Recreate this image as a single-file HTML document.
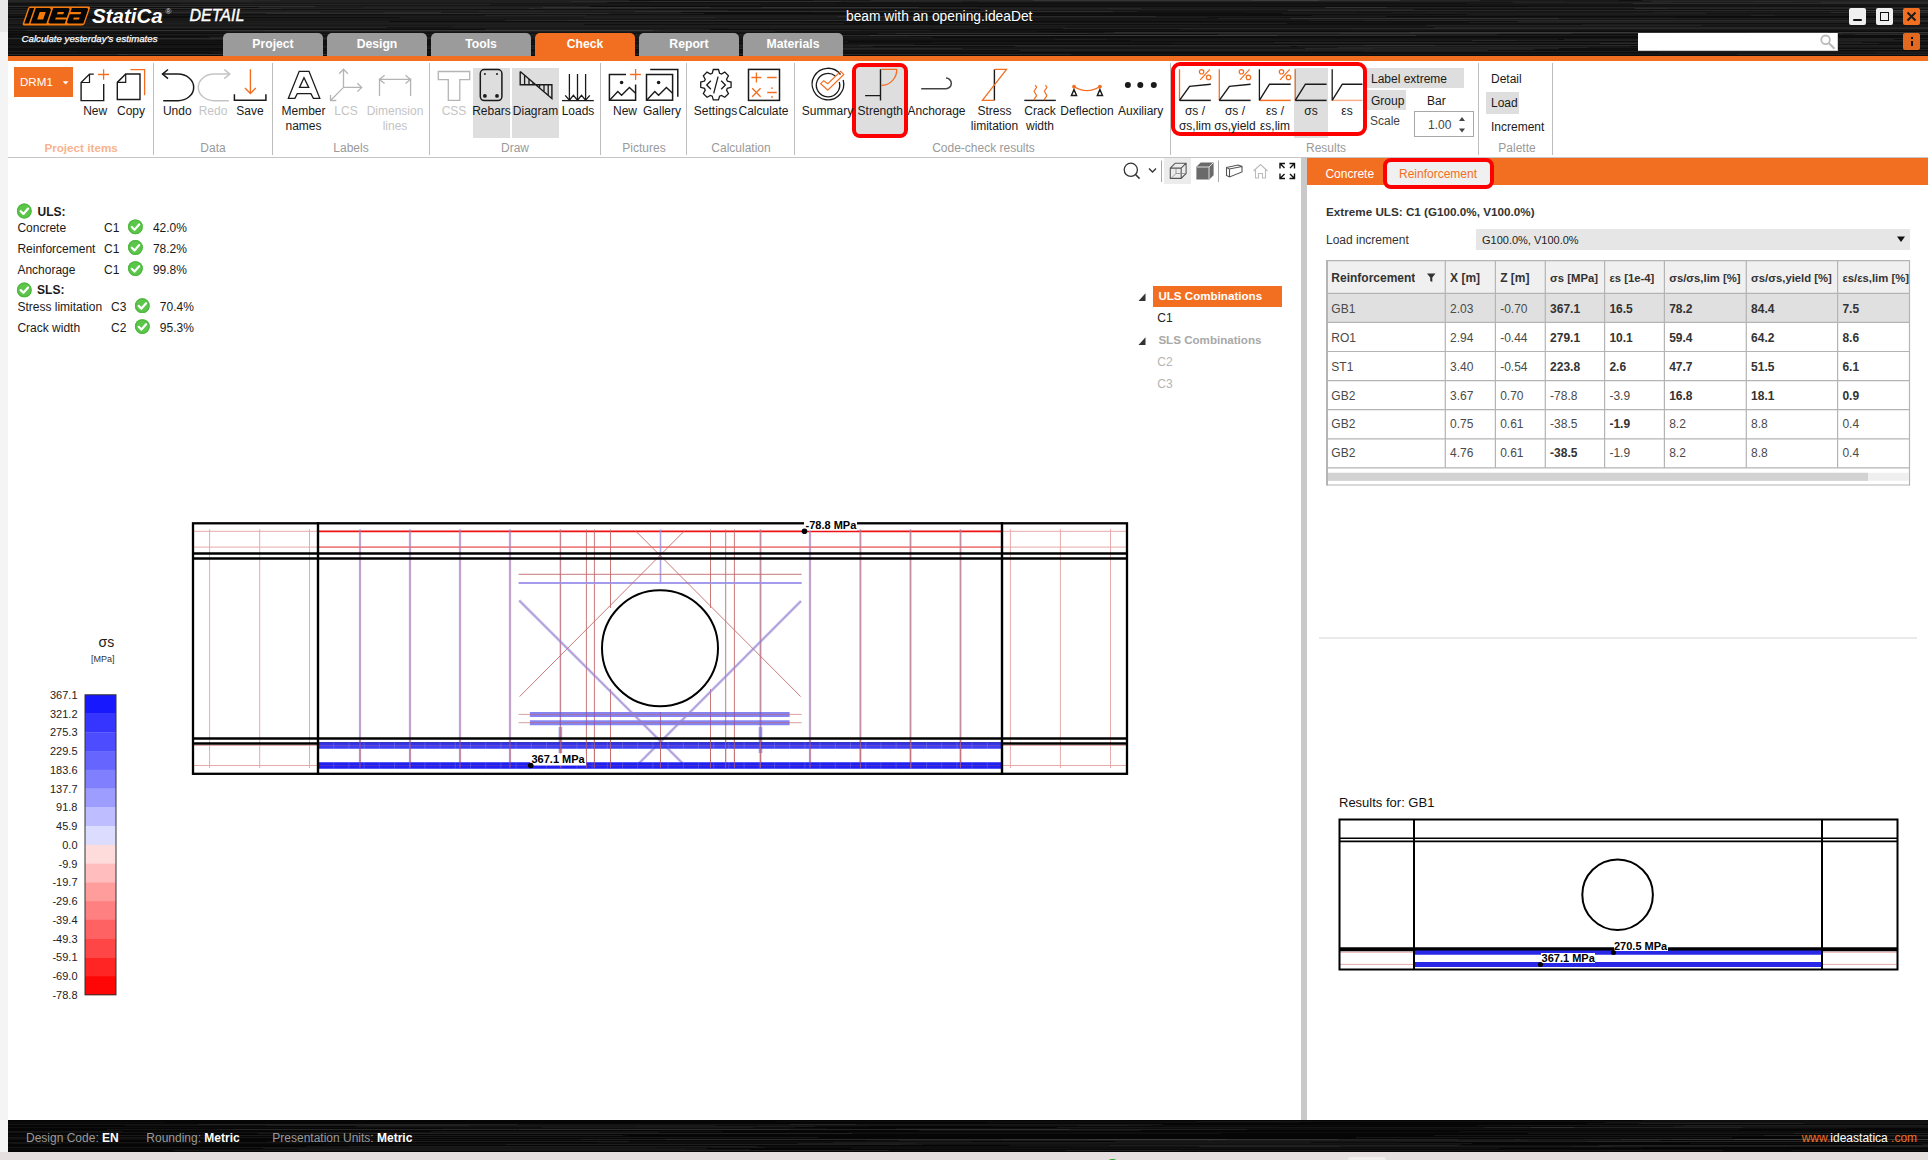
<!DOCTYPE html>
<html><head><meta charset="utf-8">
<style>
*{box-sizing:border-box;margin:0;padding:0}
html,body{width:1928px;height:1160px;overflow:hidden;background:#f4f4f4;font-family:"Liberation Sans",sans-serif;font-size:12px;color:#1a1a1a}
.a{position:absolute}
.brush{background-color:#080808;background-image:repeating-linear-gradient(180deg,rgba(255,255,255,0.00) 0px,rgba(255,255,255,0.05) 1px,rgba(0,0,0,0.0) 2px,rgba(255,255,255,0.09) 3px,rgba(0,0,0,0.1) 5px,rgba(255,255,255,0.03) 7px)}
.t{position:absolute;white-space:nowrap;line-height:14px}
.grp{position:absolute;top:141px;color:#9a9a9a;font-size:12px;line-height:14px;text-align:center}
.sep{position:absolute;top:63px;width:1px;height:92px;background:#bdbdbd}
.lbl{position:absolute;white-space:nowrap;text-align:center;line-height:14px;font-size:12px;color:#1a1a1a}
.dis{color:#c4c4c4}
svg{position:absolute;overflow:visible}
</style></head><body>
<!-- left strip -->
<div class="a" style="left:0;top:0;width:8px;height:32px;background:#e8e8e8"></div>
<!-- header -->
<div class="a" id="hdrbrush" style="left:8px;top:0;width:1920px;height:56px;overflow:hidden"><svg style="left:0;top:0" width="1920" height="56" viewBox="0 0 1920 56"><rect width="1920" height="56" fill="#0d0d0d"/><rect y="0" width="1920" height="1" fill="#fff" fill-opacity="0.015"/><rect y="1" width="1920" height="1" fill="#fff" fill-opacity="0.03"/><rect y="2" width="1920" height="1" fill="#fff" fill-opacity="0.015"/><rect y="3" width="1920" height="1" fill="#fff" fill-opacity="0.015"/><rect y="4" width="1920" height="1" fill="#fff" fill-opacity="0.03"/><rect y="5" width="1920" height="1" fill="#fff" fill-opacity="0.03"/><rect y="8" width="1920" height="1" fill="#fff" fill-opacity="0.03"/><rect y="9" width="1920" height="1" fill="#fff" fill-opacity="0.015"/><rect y="10" width="1920" height="1" fill="#fff" fill-opacity="0.045"/><rect y="11" width="1920" height="1" fill="#fff" fill-opacity="0.03"/><rect y="14" width="1920" height="1" fill="#fff" fill-opacity="0.015"/><rect y="18" width="1920" height="1" fill="#fff" fill-opacity="0.03"/><rect y="19" width="1920" height="1" fill="#fff" fill-opacity="0.045"/><rect y="20" width="1920" height="1" fill="#fff" fill-opacity="0.045"/><rect y="22" width="1920" height="1" fill="#fff" fill-opacity="0.03"/><rect y="23" width="1920" height="1" fill="#fff" fill-opacity="0.015"/><rect y="24" width="1920" height="1" fill="#fff" fill-opacity="0.015"/><rect y="25" width="1920" height="1" fill="#fff" fill-opacity="0.045"/><rect y="26" width="1920" height="1" fill="#fff" fill-opacity="0.045"/><rect y="27" width="1920" height="1" fill="#fff" fill-opacity="0.03"/><rect y="28" width="1920" height="1" fill="#fff" fill-opacity="0.045"/><rect y="30" width="1920" height="1" fill="#fff" fill-opacity="0.03"/><rect y="32" width="1920" height="1" fill="#fff" fill-opacity="0.03"/><rect y="38" width="1920" height="1" fill="#fff" fill-opacity="0.03"/><rect y="40" width="1920" height="1" fill="#fff" fill-opacity="0.015"/><rect y="42" width="1920" height="1" fill="#fff" fill-opacity="0.015"/><rect y="43" width="1920" height="1" fill="#fff" fill-opacity="0.03"/><rect y="45" width="1920" height="1" fill="#fff" fill-opacity="0.03"/><rect y="47" width="1920" height="1" fill="#fff" fill-opacity="0.045"/><rect y="49" width="1920" height="1" fill="#fff" fill-opacity="0.015"/><rect y="51" width="1920" height="1" fill="#fff" fill-opacity="0.045"/><rect y="53" width="1920" height="1" fill="#fff" fill-opacity="0.015"/><rect y="54" width="1920" height="1" fill="#fff" fill-opacity="0.045"/><rect x="40" y="26" width="924" height="1" fill="#fff" fill-opacity="0.035"/><rect x="640" y="48" width="725" height="1" fill="#fff" fill-opacity="0.037"/><rect x="142" y="4" width="610" height="1" fill="#fff" fill-opacity="0.026"/><rect x="1283" y="18" width="268" height="1" fill="#fff" fill-opacity="0.077"/><rect x="-298" y="54" width="418" height="1" fill="#fff" fill-opacity="0.033"/><rect x="1625" y="3" width="584" height="1" fill="#fff" fill-opacity="0.079"/><rect x="1419" y="25" width="274" height="1" fill="#fff" fill-opacity="0.054"/><rect x="805" y="12" width="544" height="1" fill="#fff" fill-opacity="0.025"/><rect x="-238" y="21" width="619" height="1" fill="#fff" fill-opacity="0.065"/><rect x="251" y="7" width="452" height="1" fill="#fff" fill-opacity="0.062"/><rect x="-55" y="0" width="676" height="1" fill="#fff" fill-opacity="0.068"/><rect x="471" y="11" width="658" height="1" fill="#fff" fill-opacity="0.051"/><rect x="236" y="46" width="629" height="1" fill="#fff" fill-opacity="0.059"/><rect x="1317" y="7" width="630" height="1" fill="#fff" fill-opacity="0.079"/><rect x="805" y="0" width="806" height="1" fill="#fff" fill-opacity="0.038"/><rect x="563" y="1" width="391" height="1" fill="#fff" fill-opacity="0.044"/><rect x="110" y="54" width="243" height="1" fill="#fff" fill-opacity="0.079"/><rect x="1508" y="13" width="464" height="1" fill="#fff" fill-opacity="0.021"/><rect x="1047" y="39" width="503" height="1" fill="#fff" fill-opacity="0.043"/><rect x="69" y="4" width="413" height="1" fill="#fff" fill-opacity="0.055"/><rect x="-237" y="15" width="815" height="1" fill="#fff" fill-opacity="0.042"/><rect x="1556" y="39" width="330" height="1" fill="#fff" fill-opacity="0.078"/><rect x="255" y="30" width="595" height="1" fill="#fff" fill-opacity="0.031"/><rect x="973" y="9" width="433" height="1" fill="#fff" fill-opacity="0.069"/><rect x="477" y="15" width="362" height="1" fill="#fff" fill-opacity="0.064"/><rect x="505" y="35" width="903" height="1" fill="#fff" fill-opacity="0.077"/><rect x="21" y="30" width="631" height="1" fill="#fff" fill-opacity="0.023"/><rect x="-142" y="6" width="724" height="1" fill="#fff" fill-opacity="0.078"/><rect x="1304" y="15" width="463" height="1" fill="#fff" fill-opacity="0.045"/><rect x="1711" y="38" width="500" height="1" fill="#fff" fill-opacity="0.051"/><rect x="-19" y="46" width="329" height="1" fill="#fff" fill-opacity="0.034"/><rect x="3" y="35" width="486" height="1" fill="#fff" fill-opacity="0.033"/><rect x="-233" y="13" width="270" height="1" fill="#fff" fill-opacity="0.036"/><rect x="720" y="28" width="261" height="1" fill="#fff" fill-opacity="0.023"/><rect x="1210" y="18" width="743" height="1" fill="#fff" fill-opacity="0.054"/><rect x="77" y="8" width="570" height="1" fill="#fff" fill-opacity="0.028"/><rect x="1055" y="28" width="872" height="1" fill="#fff" fill-opacity="0.064"/><rect x="274" y="33" width="804" height="1" fill="#fff" fill-opacity="0.022"/><rect x="1644" y="1" width="566" height="1" fill="#fff" fill-opacity="0.062"/><rect x="-213" y="2" width="812" height="1" fill="#fff" fill-opacity="0.058"/><rect x="-25" y="30" width="948" height="1" fill="#fff" fill-opacity="0.039"/><rect x="-4" y="8" width="277" height="1" fill="#fff" fill-opacity="0.047"/><rect x="-118" y="23" width="954" height="1" fill="#fff" fill-opacity="0.064"/><rect x="1099" y="8" width="560" height="1" fill="#fff" fill-opacity="0.025"/><rect x="18" y="30" width="627" height="1" fill="#fff" fill-opacity="0.077"/><rect x="1747" y="1" width="786" height="1" fill="#fff" fill-opacity="0.021"/><rect x="1266" y="42" width="588" height="1" fill="#fff" fill-opacity="0.055"/><rect x="-5" y="38" width="282" height="1" fill="#fff" fill-opacity="0.025"/><rect x="753" y="7" width="626" height="1" fill="#fff" fill-opacity="0.064"/><rect x="1574" y="24" width="651" height="1" fill="#fff" fill-opacity="0.048"/><rect x="43" y="34" width="731" height="1" fill="#fff" fill-opacity="0.065"/><rect x="970" y="1" width="815" height="1" fill="#fff" fill-opacity="0.025"/><rect x="642" y="1" width="915" height="1" fill="#fff" fill-opacity="0.027"/><rect x="1691" y="49" width="461" height="1" fill="#fff" fill-opacity="0.074"/><rect x="933" y="23" width="346" height="1" fill="#fff" fill-opacity="0.061"/><rect x="1823" y="12" width="373" height="1" fill="#fff" fill-opacity="0.065"/><rect x="1510" y="21" width="710" height="1" fill="#fff" fill-opacity="0.074"/><rect x="1357" y="20" width="881" height="1" fill="#fff" fill-opacity="0.035"/><rect x="1464" y="40" width="972" height="1" fill="#fff" fill-opacity="0.075"/><rect x="1274" y="13" width="424" height="1" fill="#fff" fill-opacity="0.055"/><rect x="559" y="20" width="339" height="1" fill="#fff" fill-opacity="0.028"/><rect x="-134" y="22" width="928" height="1" fill="#fff" fill-opacity="0.024"/><rect x="392" y="17" width="315" height="1" fill="#fff" fill-opacity="0.047"/><rect x="576" y="17" width="623" height="1" fill="#fff" fill-opacity="0.043"/><rect x="1722" y="33" width="888" height="1" fill="#fff" fill-opacity="0.039"/><rect x="1553" y="53" width="528" height="1" fill="#fff" fill-opacity="0.024"/><rect x="839" y="2" width="822" height="1" fill="#fff" fill-opacity="0.022"/><rect x="851" y="45" width="784" height="1" fill="#fff" fill-opacity="0.041"/><rect x="-222" y="41" width="856" height="1" fill="#fff" fill-opacity="0.028"/><rect x="477" y="29" width="225" height="1" fill="#fff" fill-opacity="0.066"/><rect x="672" y="17" width="997" height="1" fill="#fff" fill-opacity="0.028"/><rect x="172" y="3" width="657" height="1" fill="#fff" fill-opacity="0.027"/><rect x="1210" y="34" width="279" height="1" fill="#fff" fill-opacity="0.061"/><rect x="1646" y="12" width="462" height="1" fill="#fff" fill-opacity="0.031"/><rect x="1634" y="0" width="747" height="1" fill="#fff" fill-opacity="0.063"/><rect x="627" y="11" width="478" height="1" fill="#fff" fill-opacity="0.067"/><rect x="1831" y="34" width="712" height="1" fill="#fff" fill-opacity="0.057"/><rect x="352" y="48" width="602" height="1" fill="#fff" fill-opacity="0.071"/><rect x="617" y="44" width="289" height="1" fill="#fff" fill-opacity="0.045"/><rect x="1289" y="46" width="333" height="1" fill="#fff" fill-opacity="0.047"/><rect x="-273" y="12" width="585" height="1" fill="#fff" fill-opacity="0.053"/><rect x="1758" y="41" width="551" height="1" fill="#fff" fill-opacity="0.048"/><rect x="539" y="41" width="301" height="1" fill="#fff" fill-opacity="0.063"/><rect x="205" y="52" width="418" height="1" fill="#fff" fill-opacity="0.035"/><rect x="59" y="24" width="517" height="1" fill="#fff" fill-opacity="0.052"/><rect x="1012" y="50" width="468" height="1" fill="#fff" fill-opacity="0.075"/><rect x="-236" y="54" width="556" height="1" fill="#fff" fill-opacity="0.05"/><rect x="1505" y="2" width="550" height="1" fill="#fff" fill-opacity="0.053"/><rect x="827" y="49" width="699" height="1" fill="#fff" fill-opacity="0.075"/><rect x="-38" y="13" width="639" height="1" fill="#fff" fill-opacity="0.068"/><rect x="1883" y="11" width="543" height="1" fill="#fff" fill-opacity="0.061"/><rect x="1627" y="8" width="352" height="1" fill="#fff" fill-opacity="0.08"/><rect x="1822" y="46" width="894" height="1" fill="#fff" fill-opacity="0.061"/><rect x="52" y="31" width="976" height="1" fill="#fff" fill-opacity="0.033"/><rect x="888" y="33" width="946" height="1" fill="#fff" fill-opacity="0.054"/><rect x="1841" y="10" width="726" height="1" fill="#fff" fill-opacity="0.071"/><rect x="750" y="35" width="519" height="1" fill="#fff" fill-opacity="0.06"/><rect x="552" y="54" width="511" height="1" fill="#fff" fill-opacity="0.071"/><rect x="1847" y="34" width="479" height="1" fill="#fff" fill-opacity="0.054"/><rect x="1383" y="12" width="748" height="1" fill="#fff" fill-opacity="0.027"/><rect x="1244" y="0" width="228" height="1" fill="#fff" fill-opacity="0.052"/><rect x="1813" y="2" width="610" height="1" fill="#fff" fill-opacity="0.053"/><rect x="199" y="36" width="702" height="1" fill="#fff" fill-opacity="0.026"/><rect x="-31" y="10" width="751" height="1" fill="#fff" fill-opacity="0.048"/><rect x="1355" y="51" width="475" height="1" fill="#fff" fill-opacity="0.035"/><rect x="220" y="31" width="547" height="1" fill="#fff" fill-opacity="0.046"/><rect x="1651" y="52" width="737" height="1" fill="#fff" fill-opacity="0.039"/><rect x="1418" y="12" width="832" height="1" fill="#fff" fill-opacity="0.022"/><rect x="230" y="16" width="918" height="1" fill="#fff" fill-opacity="0.067"/><rect x="-155" y="1" width="398" height="1" fill="#fff" fill-opacity="0.029"/><rect x="863" y="0" width="529" height="1" fill="#fff" fill-opacity="0.063"/><rect x="1743" y="15" width="307" height="1" fill="#fff" fill-opacity="0.05"/><rect x="202" y="37" width="722" height="1" fill="#fff" fill-opacity="0.057"/><rect x="509" y="45" width="918" height="1" fill="#fff" fill-opacity="0.052"/><rect x="-205" y="27" width="584" height="1" fill="#fff" fill-opacity="0.058"/><rect x="1868" y="52" width="830" height="1" fill="#fff" fill-opacity="0.03"/><rect x="1887" y="13" width="853" height="1" fill="#fff" fill-opacity="0.033"/><rect x="258" y="13" width="438" height="1" fill="#fff" fill-opacity="0.075"/><rect x="1123" y="40" width="385" height="1" fill="#fff" fill-opacity="0.039"/><rect x="497" y="20" width="423" height="1" fill="#fff" fill-opacity="0.067"/><rect x="96" y="12" width="337" height="1" fill="#fff" fill-opacity="0.073"/><rect x="61" y="8" width="465" height="1" fill="#fff" fill-opacity="0.043"/><rect x="1426" y="27" width="756" height="1" fill="#fff" fill-opacity="0.067"/><rect x="521" y="8" width="612" height="1" fill="#fff" fill-opacity="0.058"/><rect x="-228" y="51" width="298" height="1" fill="#fff" fill-opacity="0.032"/><rect x="1164" y="43" width="569" height="1" fill="#fff" fill-opacity="0.027"/><rect x="1106" y="32" width="714" height="1" fill="#fff" fill-opacity="0.08"/><rect x="474" y="53" width="272" height="1" fill="#fff" fill-opacity="0.049"/><rect x="-147" y="1" width="980" height="1" fill="#fff" fill-opacity="0.053"/><rect x="1671" y="32" width="350" height="1" fill="#fff" fill-opacity="0.031"/><rect x="535" y="7" width="376" height="1" fill="#fff" fill-opacity="0.07"/><rect x="90" y="18" width="793" height="1" fill="#fff" fill-opacity="0.024"/><rect x="1592" y="43" width="279" height="1" fill="#fff" fill-opacity="0.066"/><rect x="1301" y="20" width="678" height="1" fill="#fff" fill-opacity="0.046"/><rect x="1461" y="22" width="415" height="1" fill="#fff" fill-opacity="0.056"/><rect x="-133" y="0" width="405" height="1" fill="#fff" fill-opacity="0.031"/><rect x="1172" y="29" width="957" height="1" fill="#fff" fill-opacity="0.042"/><rect x="376" y="12" width="297" height="1" fill="#fff" fill-opacity="0.051"/><rect x="1025" y="0" width="286" height="1" fill="#fff" fill-opacity="0.068"/><rect x="1356" y="45" width="783" height="1" fill="#fff" fill-opacity="0.056"/><rect x="1096" y="32" width="980" height="1" fill="#fff" fill-opacity="0.035"/><rect x="355" y="7" width="615" height="1" fill="#fff" fill-opacity="0.028"/><rect x="1907" y="21" width="911" height="1" fill="#fff" fill-opacity="0.042"/><rect x="443" y="27" width="615" height="1" fill="#fff" fill-opacity="0.032"/><rect x="-12" y="11" width="549" height="1" fill="#fff" fill-opacity="0.038"/><rect x="-257" y="6" width="564" height="1" fill="#fff" fill-opacity="0.079"/><rect x="-97" y="39" width="437" height="1" fill="#fff" fill-opacity="0.036"/><rect x="924" y="42" width="545" height="1" fill="#fff" fill-opacity="0.033"/><rect x="445" y="25" width="745" height="1" fill="#fff" fill-opacity="0.025"/><rect x="1738" y="32" width="857" height="1" fill="#fff" fill-opacity="0.033"/><rect x="1319" y="7" width="788" height="1" fill="#fff" fill-opacity="0.021"/><rect x="142" y="39" width="956" height="1" fill="#fff" fill-opacity="0.034"/><rect x="1344" y="28" width="716" height="1" fill="#fff" fill-opacity="0.023"/><rect x="1238" y="12" width="211" height="1" fill="#fff" fill-opacity="0.026"/><rect x="829" y="16" width="549" height="1" fill="#fff" fill-opacity="0.053"/><rect x="1402" y="32" width="733" height="1" fill="#fff" fill-opacity="0.054"/><rect x="1520" y="6" width="860" height="1" fill="#fff" fill-opacity="0.025"/><rect x="-116" y="38" width="595" height="1" fill="#fff" fill-opacity="0.076"/><rect x="1280" y="10" width="683" height="1" fill="#fff" fill-opacity="0.078"/><rect x="1729" y="54" width="754" height="1" fill="#fff" fill-opacity="0.057"/><rect x="1459" y="3" width="706" height="1" fill="#fff" fill-opacity="0.045"/><rect x="1332" y="33" width="812" height="1" fill="#fff" fill-opacity="0.039"/><rect x="870" y="33" width="694" height="1" fill="#fff" fill-opacity="0.059"/><rect x="861" y="35" width="879" height="1" fill="#fff" fill-opacity="0.063"/><rect x="-190" y="18" width="214" height="1" fill="#fff" fill-opacity="0.066"/><rect x="-125" y="37" width="848" height="1" fill="#fff" fill-opacity="0.029"/><rect x="1297" y="48" width="254" height="1" fill="#fff" fill-opacity="0.074"/><rect x="1329" y="47" width="251" height="1" fill="#fff" fill-opacity="0.055"/><rect x="1007" y="46" width="275" height="1" fill="#fff" fill-opacity="0.068"/><rect x="1459" y="14" width="936" height="1" fill="#fff" fill-opacity="0.049"/></svg></div>
<div class="a" style="left:8px;top:56px;width:1920px;height:5px;background:#f26f22"></div>

<!-- logo -->
<svg style="left:18px;top:4px" width="80" height="26" viewBox="0 0 80 26">
 <g transform="translate(0,0) skewX(-19)">
  <rect x="11.5" y="2.6" width="62" height="19" rx="2" fill="#f57a0a"/>
  <rect x="13" y="4" width="4.6" height="15.4" fill="#050505"/>
  <path d="M19.2 4 H32 a3 3 0 0 1 3 3 V19.4 H19.2 Z M24.5 8 V15.6 H30.5 V8 Z" fill="#050505" fill-rule="evenodd"/>
  <path d="M36.6 4 H51.5 a2 2 0 0 1 2 2 V13.5 H42.5 V15.5 H53.5 V19.4 H38.6 a2 2 0 0 1 -2 -2 Z M42.5 8 V10.2 H48.8 V8 Z" fill="#050505" fill-rule="evenodd"/>
  <path d="M55.2 4 H70 a2 2 0 0 1 2 2 V19.4 H57.2 a2 2 0 0 1 -2 -2 V10.2 H66 V8 H55.2 Z M60.5 13.5 V15.6 H66.3 V13.5 Z" fill="#050505" fill-rule="evenodd"/>
 </g>
</svg>
<div class="t" style="left:92px;top:6px;font-size:20.5px;line-height:20px;font-weight:bold;font-style:italic;color:#fff">StatiCa</div>
<div class="t" style="left:165.5px;top:8px;font-size:8px;line-height:8px;color:#ddd">&#174;</div>
<div class="t" style="left:189.5px;top:8px;font-size:16px;line-height:16px;font-weight:normal;font-style:italic;color:#fff;-webkit-text-stroke:0.4px #fff">DETAIL</div>
<div class="t" style="left:21.5px;top:33px;font-size:9.7px;line-height:11px;font-weight:normal;font-style:italic;color:#fff;-webkit-text-stroke:0.25px #fff">Calculate yesterday&#8217;s estimates</div>
<!-- tabs -->
<div class="a" style="left:223px;top:33px;width:100px;height:23px;background:#9b9b9b;border-radius:5px 5px 0 0;color:#fff;font-weight:bold;font-size:12.2px;line-height:23px;text-align:center">Project</div>
<div class="a" style="left:327px;top:33px;width:100px;height:23px;background:#9b9b9b;border-radius:5px 5px 0 0;color:#fff;font-weight:bold;font-size:12.2px;line-height:23px;text-align:center">Design</div>
<div class="a" style="left:431px;top:33px;width:100px;height:23px;background:#9b9b9b;border-radius:5px 5px 0 0;color:#fff;font-weight:bold;font-size:12.2px;line-height:23px;text-align:center">Tools</div>
<div class="a" style="left:535px;top:33px;width:100px;height:23px;background:#f26f22;border-radius:5px 5px 0 0;color:#fff;font-weight:bold;font-size:12.2px;line-height:23px;text-align:center">Check</div>
<div class="a" style="left:639px;top:33px;width:100px;height:23px;background:#9b9b9b;border-radius:5px 5px 0 0;color:#fff;font-weight:bold;font-size:12.2px;line-height:23px;text-align:center">Report</div>
<div class="a" style="left:743px;top:33px;width:100px;height:23px;background:#9b9b9b;border-radius:5px 5px 0 0;color:#fff;font-weight:bold;font-size:12.2px;line-height:23px;text-align:center">Materials</div>
<!-- title -->
<div class="t" style="left:846px;top:9px;font-size:13.8px;line-height:16px;color:#fff">beam with an opening.ideaDet</div>
<!-- window buttons -->
<div class="a" style="left:1849px;top:8px;width:17px;height:17px;background:#f0f0f0;border-radius:2px"></div>
<div class="a" style="left:1853px;top:19px;width:9px;height:2px;background:#111;border-radius:1px"></div>
<div class="a" style="left:1876px;top:8px;width:17px;height:17px;background:#f0f0f0;border-radius:2px"></div>
<div class="a" style="left:1880px;top:12px;width:9px;height:9px;border:1.6px solid #111"></div>
<div class="a" style="left:1903px;top:8px;width:17px;height:17px;background:#f26f22;border-radius:2px"></div>
<svg style="left:1903px;top:8px" width="17" height="17"><path d="M4.5 4.5 L12.5 12.5 M12.5 4.5 L4.5 12.5" stroke="#1a1a1a" stroke-width="2"/></svg>
<!-- search -->
<div class="a" style="left:1638px;top:33px;width:200px;height:18px;background:#fff;border-right:1px solid #ccc;border-bottom:1px solid #ccc"></div>
<svg style="left:1818px;top:34px" width="20" height="18"><circle cx="7.6" cy="5.8" r="4.3" fill="none" stroke="#bbb" stroke-width="1.8"/><path d="M10.8 9 L16.5 14.8" stroke="#bbb" stroke-width="2.2"/></svg>
<div class="a" style="left:1903px;top:33px;width:17px;height:17px;background:#e2691f;border-radius:2px"></div>
<div class="a" style="left:1910.5px;top:37px;width:2px;height:2px;background:#111"></div>
<div class="a" style="left:1910.5px;top:40.5px;width:2px;height:5.5px;background:#111"></div>

<!-- ribbon -->
<div class="a" style="left:8px;top:61px;width:1920px;height:96px;background:#fff"></div>
<div class="a" style="left:8px;top:157px;width:1920px;height:1px;background:#c6c6c6"></div>
<!-- RIBBON START -->

<div class="a" style="left:473px;top:68px;width:37px;height:70px;background:#dedede"></div>
<div class="a" style="left:512px;top:68px;width:47px;height:70px;background:#dedede"></div>
<div class="a" style="left:1294px;top:68px;width:34px;height:70px;background:#dedede"></div>
<div class="a" style="left:852px;top:63px;width:56px;height:75px;border:4px solid #ff0000;border-radius:8px;background:#dedede"></div>
<div class="a" style="left:1171px;top:62px;width:196px;height:74px;border:4px solid #ff0000;border-radius:9px"></div>
<div class="a" style="left:1367px;top:68px;width:97px;height:20px;background:#dedede"></div>
<div class="a" style="left:1367px;top:90px;width:39px;height:20px;background:#dedede"></div>
<div class="a" style="left:1486px;top:92px;width:33px;height:22px;background:#dedede"></div>
<div class="a" style="left:1414px;top:111px;width:60px;height:26px;border:1px solid #a8a8a8;background:#fff"></div>
<div class="a" style="left:14px;top:67px;width:59px;height:30px;background:#f26f22"></div>

<div class="sep" style="left:153px"></div>
<div class="sep" style="left:272px"></div>
<div class="sep" style="left:429px"></div>
<div class="sep" style="left:600px"></div>
<div class="sep" style="left:686px"></div>
<div class="sep" style="left:794px"></div>
<div class="sep" style="left:1170px"></div>
<div class="sep" style="left:1478px"></div>
<div class="sep" style="left:1552px"></div>
<svg style="left:0;top:0" width="1928" height="160" viewBox="0 0 1928 160">
<g fill="none" stroke="#1a1a1a" stroke-width="1.4" stroke-linejoin="miter">
<!-- DRM1 dropdown -->
<path d="M63.3 81.6 h4.6 l-2.3 2.6 z" fill="#fff" stroke="#fff" stroke-width="0.6"/>
<!-- New page -->
<path d="M93.8 74.1 H89.5 L81.1 82.5 V100.6 H103.7 V84"/>
<path d="M89.5 74.1 V82.5 H81.1" stroke-width="1.2"/>
<path d="M98 74.5 H109 M103.6 69.2 V79.8" stroke="#f26f22" stroke-width="1.3"/>
<!-- Copy -->
<path d="M140 74 H125.7 L117.3 82.4 V99.5 H140 Z"/>
<path d="M125.7 74 V82.4 H117.3" stroke-width="1.2"/>
<path d="M130.5 69.6 H144.6 V95.3" stroke="#f26f22" stroke-width="1.3"/>
<!-- Undo -->
<path d="M162.5 74.1 H178 A15.7 13.3 0 0 1 178 100.7 H163.2" stroke-width="1.5"/>
<path d="M168 69.5 L162.5 74.1 L168 78.7" stroke-width="1.5"/>
<!-- Redo -->
<path d="M229.8 74.1 H214 A15.7 13.3 0 0 0 214 100.7 H228.8" stroke="#c4c4c4" stroke-width="1.5"/>
<path d="M224.3 69.5 L229.8 74.1 L224.3 78.7" stroke="#c4c4c4" stroke-width="1.5"/>
<!-- Save -->
<path d="M234.4 94.3 V100.2 H265.9 V94.3" stroke-width="1.5"/>
<path d="M250.4 69.2 V93.5 M245 88 L250.4 93.5 L255.8 88" stroke="#f26f22" stroke-width="1.4"/>
<!-- Member names A -->
<path d="M288.4 98.3 L299.2 71.3 H309 L319.8 98.3 H313.4 L310.9 93.6 H297.3 L294.9 98.3 Z" stroke-width="1.3"/>
<path d="M304 77.8 L308.7 87.4 H299.5 Z" stroke-width="1.3"/>
<!-- LCS -->
<g stroke="#b4b4b4" stroke-width="1.3">
<path d="M343.5 87.4 V69.2 M339.2 73.8 L343.5 69.2 L347.9 73.8"/>
<path d="M343.5 87.4 H361.7 M357.3 83.2 L361.7 87.4 L357.3 91.6"/>
<path d="M343.5 87.4 L330.5 100.5 M330.5 94.9 V100.5 H336.3"/>
<!-- Dimension lines -->
<path d="M379.5 78.2 V96 M410.6 78.2 V96 M379.5 79.4 H410.6 M384.6 75.3 L379.5 79.4 L384.6 83.6 M405.5 75.3 L410.6 79.4 L405.5 83.6"/>
<!-- CSS T -->
<path d="M438.3 71.5 H469.7 V79.7 H459.8 V100.4 H448.3 V79.7 H438.3 Z"/>
</g>
<!-- Rebars -->
<rect x="480.3" y="69.5" width="21.6" height="31.1" rx="4" stroke-width="1.5"/>
<circle cx="484.9" cy="74" r="1" fill="#1a1a1a" stroke="none"/>
<circle cx="497" cy="74" r="1" fill="#1a1a1a" stroke="none"/>
<circle cx="484.9" cy="95.9" r="1.9" fill="#1a1a1a" stroke="none"/>
<circle cx="497" cy="95.9" r="1.9" fill="#1a1a1a" stroke="none"/>
<!-- Diagram -->
<path d="M520.2 71.5 V84.7 H551.9 V98.5 L520.2 71.5" stroke-width="1.4"/>
<path d="M524.6 75.3 V84.7 M529 79 V84.7 M533 82.5 V84.7 M539.6 84.7 V87.4 M544 84.7 V91.2 M548.2 84.7 V95" stroke-width="1.3"/>
<!-- Loads -->
<path d="M569.4 74.1 V100.2 M577.5 74.1 V100.2 M585.6 74.1 V100.2" stroke-width="1.3"/>
<path d="M565.2 95.3 L569.4 100.2 L573.4 95.3 L577.5 100.2 L581.5 95.3 L585.6 100.2 L589.8 95.3" stroke-width="1.3"/>
<path d="M562 100.6 H593.8" stroke-width="1.3"/>
<!-- Picture New -->
<path d="M626 74.5 H609.4 V100.2 H635.6 V84.5" stroke-width="1.5"/>
<path d="M609.8 100 L617.8 91.5 L621.6 95.3 L629.4 87.5 L635.3 93" stroke-width="1.4"/>
<circle cx="621.6" cy="82.5" r="1.8" fill="#1a1a1a" stroke="none"/>
<path d="M630.1 74.5 H640.9 M635.6 69.1 V79.9" stroke="#f26f22" stroke-width="1.3"/>
<!-- Gallery -->
<rect x="646.5" y="74.5" width="26.1" height="25.7" stroke-width="1.5"/>
<path d="M646.9 100 L654.8 91.5 L658.6 95.3 L666.4 87.5 L672.3 93" stroke-width="1.4"/>
<circle cx="658.6" cy="82.5" r="1.8" fill="#1a1a1a" stroke="none"/>
<path d="M650.2 69.4 H677.8 V96.7" stroke-width="1.5"/>
<!-- Settings gear -->
<path d="M727.33 81.04 L731.08 82.09 L731.08 87.31 L727.33 88.36 L726.57 90.19 L728.47 93.59 L724.79 97.27 L721.39 95.37 L719.56 96.13 L718.51 99.88 L713.29 99.88 L712.24 96.13 L710.41 95.37 L707.01 97.27 L703.33 93.59 L705.23 90.19 L704.47 88.36 L700.72 87.31 L700.72 82.09 L704.47 81.04 L705.23 79.21 L703.33 75.81 L707.01 72.13 L710.41 74.03 L712.24 73.27 L713.29 69.52 L718.51 69.52 L719.56 73.27 L721.39 74.03 L724.79 72.13 L728.47 75.81 L726.57 79.21 Z" stroke-width="1.3"/>
<path d="M710.9 80.8 L706.7 85 L710.9 89.2 M718.1 76.6 L713.7 93.4 M721.2 80.8 L725.4 85 L721.2 89.2" stroke-width="1.3"/>
<!-- Calculator -->
<rect x="748.5" y="69.4" width="31" height="31" stroke-width="1.5"/>
<path d="M751.4 77.5 H761.4 M756.4 72.5 V82.5 M767.2 77.5 H776.7 M752.2 88.3 L760.6 96.7 M760.6 88.3 L752.2 96.7 M767.2 92.5 H776.7" stroke="#f26f22" stroke-width="1.3"/>
<circle cx="772" cy="88.1" r="0.9" fill="#f26f22" stroke="none"/>
<circle cx="772" cy="96.9" r="0.9" fill="#f26f22" stroke="none"/>
<!-- Summary -->
<path d="M840.5 74.5 A15.8 15.8 0 1 0 843.2 80" stroke-width="1.3"/>
<path d="M835.3 76 A11.7 11.7 0 1 0 839.3 82" stroke-width="1.3"/>
<path d="M820.7 83.7 L827.8 90.2 L843.8 74.4 L840.7 71.3 L827.8 83.7 L823.7 80.7 Z" stroke="#f26f22" stroke-width="1.2"/>
<!-- Strength -->
<path d="M880.5 69.3 V100.6 M865.1 95.6 H880.5" stroke-width="1.4"/>
<path d="M881.3 69.3 H896.7 A15.4 15.4 0 0 1 881.3 85.4" stroke="#f26f22" stroke-width="1.3"/>
<!-- Anchorage -->
<path d="M921.2 88.7 H946 A5.3 5.3 0 0 0 946 78.1" stroke="#444" stroke-width="1.5"/>
<!-- Stress -->
<path d="M994.4 69.4 V100.4" stroke-width="1.4"/>
<path d="M994.4 69.4 H1006.5 L982.4 100.4 H994.4" stroke="#f26f22" stroke-width="1.3"/>
<!-- Crack -->
<path d="M1024.3 100.4 H1055.8" stroke-width="1.4"/>
<path d="M1035.1 85.2 L1036.6 87.2 L1034.1 91.2 L1036.6 95.7 L1033.6 100.2 M1045.4 85.2 L1046.9 87.2 L1044.4 91.2 L1046.9 95.7 L1043.9 100.2" stroke="#f26f22" stroke-width="1.2"/>
<!-- Deflection -->
<path d="M1074 86.6 Q1086.9 94.6 1099.9 86.6" stroke="#f26f22" stroke-width="1.3"/>
<circle cx="1074" cy="86.6" r="1.9" fill="#f26f22" stroke="none"/>
<circle cx="1099.9" cy="86.6" r="1.9" fill="#f26f22" stroke="none"/>
<path d="M1074 89.6 L1076.6 95.5 H1071.4 Z M1099.9 89.6 L1102.5 95.5 H1097.3 Z" stroke-width="1.4"/>
<!-- Auxiliary -->
<circle cx="1127.9" cy="85" r="3" fill="#1a1a1a" stroke="none"/>
<circle cx="1140.3" cy="85" r="3" fill="#1a1a1a" stroke="none"/>
<circle cx="1153.8" cy="85" r="3" fill="#1a1a1a" stroke="none"/>
<path d="M1179.5 69.3 V100.4" stroke="#f26f22" stroke-width="1.3"/><path d="M1179.5 100.4 H1210.8" stroke="#1a1a1a" stroke-width="1.5"/><path d="M1179.5 100.4 L1189.6 86.4 L1210.8 84.2" stroke-width="1.4"/><circle cx="1201.6" cy="71.8" r="2.2" stroke="#f26f22" stroke-width="1.2"/><circle cx="1208.6" cy="77.4" r="2.2" stroke="#f26f22" stroke-width="1.2"/><path d="M1200.2 79.9 L1209.8 69.3" stroke="#f26f22" stroke-width="1.2"/><path d="M1219.3 69.3 V100.4" stroke="#f26f22" stroke-width="1.3"/><path d="M1219.3 100.4 H1250.6" stroke="#1a1a1a" stroke-width="1.5"/><path d="M1219.3 100.4 L1229.3999999999999 86.4 L1250.6 84.2" stroke-width="1.4"/><circle cx="1241.3999999999999" cy="71.8" r="2.2" stroke="#f26f22" stroke-width="1.2"/><circle cx="1248.3999999999999" cy="77.4" r="2.2" stroke="#f26f22" stroke-width="1.2"/><path d="M1240.0 79.9 L1249.6 69.3" stroke="#f26f22" stroke-width="1.2"/><path d="M1259.4 69.3 V100.4" stroke="#1a1a1a" stroke-width="1.3"/><path d="M1259.4 100.4 H1290.7" stroke="#f26f22" stroke-width="1.5"/><path d="M1259.4 100.4 L1269.5 84.2 H1290.7" stroke-width="1.4"/><circle cx="1281.5" cy="71.8" r="2.2" stroke="#f26f22" stroke-width="1.2"/><circle cx="1288.5" cy="77.4" r="2.2" stroke="#f26f22" stroke-width="1.2"/><path d="M1280.1000000000001 79.9 L1289.7 69.3" stroke="#f26f22" stroke-width="1.2"/><path d="M1295.3 69.3 V100.4" stroke="#f26f22" stroke-width="1.3"/><path d="M1295.3 100.4 H1326.6" stroke="#1a1a1a" stroke-width="1.5"/><path d="M1295.3 100.4 L1305.3999999999999 84.2 H1326.6" stroke-width="1.4"/><path d="M1332.2 69.3 V100.4" stroke="#1a1a1a" stroke-width="1.3"/><path d="M1332.2 100.4 H1362.4" stroke="#f5b08a" stroke-width="1.5"/><path d="M1332.2 100.4 L1342.3 84.2 H1362.4" stroke-width="1.4"/>
<!-- spin arrows -->
<path d="M1462 117 l3 4 h-6 z M1459 128.5 h6 l-3 4 z" fill="#444" stroke="none"/>
</g></svg>
<div class="t" style="left:20px;top:75px;font-size:11.6px;color:#fff">DRM1</div>
<div class="lbl" style="left:35.2px;top:104px;width:120px">New</div>
<div class="lbl" style="left:71.0px;top:104px;width:120px">Copy</div>
<div class="lbl" style="left:117.3px;top:104px;width:120px">Undo</div>
<div class="lbl" style="left:153.0px;top:104px;width:120px;color:#c4c4c4">Redo</div>
<div class="lbl" style="left:190.0px;top:104px;width:120px">Save</div>
<div class="lbl" style="left:243.5px;top:104px;width:120px">Member</div>
<div class="lbl" style="left:243.5px;top:119px;width:120px">names</div>
<div class="lbl" style="left:286.0px;top:104px;width:120px;color:#c4c4c4">LCS</div>
<div class="lbl" style="left:335.0px;top:104px;width:120px;color:#c4c4c4">Dimension</div>
<div class="lbl" style="left:335.0px;top:119px;width:120px;color:#c4c4c4">lines</div>
<div class="lbl" style="left:394.0px;top:104px;width:120px;color:#c4c4c4">CSS</div>
<div class="lbl" style="left:431.5px;top:104px;width:120px">Rebars</div>
<div class="lbl" style="left:475.5px;top:104px;width:120px">Diagram</div>
<div class="lbl" style="left:518.0px;top:104px;width:120px">Loads</div>
<div class="lbl" style="left:565.0px;top:104px;width:120px">New</div>
<div class="lbl" style="left:602.0px;top:104px;width:120px">Gallery</div>
<div class="lbl" style="left:655.5px;top:104px;width:120px">Settings</div>
<div class="lbl" style="left:703.5px;top:104px;width:120px">Calculate</div>
<div class="lbl" style="left:767.5px;top:104px;width:120px">Summary</div>
<div class="lbl" style="left:820.3px;top:104px;width:120px">Strength</div>
<div class="lbl" style="left:876.5px;top:104px;width:120px">Anchorage</div>
<div class="lbl" style="left:934.5px;top:104px;width:120px">Stress</div>
<div class="lbl" style="left:934.5px;top:119px;width:120px">limitation</div>
<div class="lbl" style="left:980.0px;top:104px;width:120px">Crack</div>
<div class="lbl" style="left:980.0px;top:119px;width:120px">width</div>
<div class="lbl" style="left:1027.0px;top:104px;width:120px">Deflection</div>
<div class="lbl" style="left:1080.7px;top:104px;width:120px">Auxiliary</div>
<div class="lbl" style="left:1135.0px;top:104px;width:120px">σs /</div>
<div class="lbl" style="left:1135.0px;top:119px;width:120px">σs,lim</div>
<div class="lbl" style="left:1175.0px;top:104px;width:120px">σs /</div>
<div class="lbl" style="left:1175.0px;top:119px;width:120px">σs,yield</div>
<div class="lbl" style="left:1215.0px;top:104px;width:120px">εs /</div>
<div class="lbl" style="left:1215.0px;top:119px;width:120px">εs,lim</div>
<div class="lbl" style="left:1251.0px;top:104px;width:120px">σs</div>
<div class="lbl" style="left:1287.0px;top:104px;width:120px">εs</div>
<div class="t" style="left:1371px;top:72px">Label extreme</div>
<div class="t" style="left:1371px;top:93.5px">Group</div>
<div class="t" style="left:1427px;top:93.5px">Bar</div>
<div class="t" style="left:1370px;top:114px;color:#444">Scale</div>
<div class="t" style="left:1428px;top:118px;color:#444">1.00</div>
<div class="t" style="left:1491px;top:72px">Detail</div>
<div class="t" style="left:1491px;top:96px">Load</div>
<div class="t" style="left:1491px;top:120px">Increment</div>
<div class="grp" style="left:1.1px;width:160px;color:#f7b38e;font-weight:bold;font-size:11.7px">Project items</div>
<div class="grp" style="left:133.0px;width:160px">Data</div>
<div class="grp" style="left:271.0px;width:160px">Labels</div>
<div class="grp" style="left:435.0px;width:160px">Draw</div>
<div class="grp" style="left:564.0px;width:160px">Pictures</div>
<div class="grp" style="left:661.0px;width:160px">Calculation</div>
<div class="grp" style="left:903.5px;width:160px">Code-check results</div>
<div class="grp" style="left:1246.0px;width:160px">Results</div>
<div class="grp" style="left:1437.0px;width:160px">Palette</div>
<!-- RIBBON END -->

<!-- main -->
<div class="a" style="left:8px;top:158px;width:1293px;height:962px;background:#fff"></div>
<div class="a" style="left:1301px;top:158px;width:6px;height:962px;background:#c9c9c9"></div>
<div class="a" style="left:1307px;top:158px;width:621px;height:962px;background:#fff"></div>
<div class="a" style="left:1307px;top:158px;width:621px;height:27px;background:#f26f22"></div>
<!-- status -->
<div class="a" id="stbrush" style="left:8px;top:1120px;width:1920px;height:32px;overflow:hidden"><svg style="left:0;top:0" width="1920" height="32" viewBox="0 0 1920 32"><rect width="1920" height="32" fill="#060606"/><rect x="-114" y="15" width="735" height="1" fill="#fff" fill-opacity="0.025"/><rect x="291" y="29" width="451" height="1" fill="#fff" fill-opacity="0.05"/><rect x="-94" y="7" width="839" height="1" fill="#fff" fill-opacity="0.041"/><rect x="534" y="7" width="253" height="1" fill="#fff" fill-opacity="0.038"/><rect x="209" y="9" width="572" height="1" fill="#fff" fill-opacity="0.042"/><rect x="1565" y="26" width="815" height="1" fill="#fff" fill-opacity="0.033"/><rect x="1191" y="26" width="996" height="1" fill="#fff" fill-opacity="0.057"/><rect x="888" y="8" width="951" height="1" fill="#fff" fill-opacity="0.026"/><rect x="166" y="30" width="715" height="1" fill="#fff" fill-opacity="0.065"/><rect x="825" y="22" width="478" height="1" fill="#fff" fill-opacity="0.05"/><rect x="841" y="12" width="971" height="1" fill="#fff" fill-opacity="0.032"/><rect x="1756" y="15" width="868" height="1" fill="#fff" fill-opacity="0.066"/><rect x="-52" y="2" width="209" height="1" fill="#fff" fill-opacity="0.034"/><rect x="-190" y="27" width="838" height="1" fill="#fff" fill-opacity="0.022"/><rect x="1918" y="14" width="484" height="1" fill="#fff" fill-opacity="0.024"/><rect x="358" y="5" width="763" height="1" fill="#fff" fill-opacity="0.032"/><rect x="1682" y="23" width="690" height="1" fill="#fff" fill-opacity="0.038"/><rect x="1107" y="21" width="706" height="1" fill="#fff" fill-opacity="0.057"/><rect x="190" y="4" width="658" height="1" fill="#fff" fill-opacity="0.06"/><rect x="1520" y="13" width="634" height="1" fill="#fff" fill-opacity="0.057"/><rect x="317" y="24" width="577" height="1" fill="#fff" fill-opacity="0.028"/><rect x="891" y="20" width="761" height="1" fill="#fff" fill-opacity="0.058"/><rect x="1451" y="11" width="869" height="1" fill="#fff" fill-opacity="0.038"/><rect x="1592" y="6" width="531" height="1" fill="#fff" fill-opacity="0.024"/><rect x="1469" y="5" width="777" height="1" fill="#fff" fill-opacity="0.048"/><rect x="924" y="29" width="994" height="1" fill="#fff" fill-opacity="0.02"/><rect x="573" y="19" width="877" height="1" fill="#fff" fill-opacity="0.05"/><rect x="1726" y="19" width="942" height="1" fill="#fff" fill-opacity="0.058"/><rect x="858" y="20" width="346" height="1" fill="#fff" fill-opacity="0.031"/><rect x="1200" y="20" width="320" height="1" fill="#fff" fill-opacity="0.036"/><rect x="843" y="28" width="648" height="1" fill="#fff" fill-opacity="0.047"/><rect x="1577" y="19" width="525" height="1" fill="#fff" fill-opacity="0.031"/><rect x="45" y="15" width="570" height="1" fill="#fff" fill-opacity="0.061"/><rect x="1188" y="1" width="893" height="1" fill="#fff" fill-opacity="0.04"/><rect x="498" y="24" width="956" height="1" fill="#fff" fill-opacity="0.048"/><rect x="1914" y="24" width="358" height="1" fill="#fff" fill-opacity="0.062"/><rect x="423" y="11" width="291" height="1" fill="#fff" fill-opacity="0.058"/><rect x="-209" y="18" width="426" height="1" fill="#fff" fill-opacity="0.046"/><rect x="911" y="10" width="222" height="1" fill="#fff" fill-opacity="0.053"/><rect x="-38" y="27" width="795" height="1" fill="#fff" fill-opacity="0.047"/><rect x="1070" y="5" width="283" height="1" fill="#fff" fill-opacity="0.034"/><rect x="985" y="6" width="286" height="1" fill="#fff" fill-opacity="0.021"/><rect x="99" y="9" width="963" height="1" fill="#fff" fill-opacity="0.061"/><rect x="705" y="27" width="929" height="1" fill="#fff" fill-opacity="0.031"/><rect x="1580" y="21" width="603" height="1" fill="#fff" fill-opacity="0.038"/><rect x="259" y="21" width="705" height="1" fill="#fff" fill-opacity="0.044"/><rect x="-111" y="4" width="620" height="1" fill="#fff" fill-opacity="0.058"/><rect x="-285" y="22" width="587" height="1" fill="#fff" fill-opacity="0.062"/><rect x="1917" y="29" width="855" height="1" fill="#fff" fill-opacity="0.021"/><rect x="-259" y="23" width="312" height="1" fill="#fff" fill-opacity="0.041"/><rect x="298" y="26" width="451" height="1" fill="#fff" fill-opacity="0.057"/><rect x="386" y="24" width="528" height="1" fill="#fff" fill-opacity="0.03"/><rect x="1867" y="27" width="499" height="1" fill="#fff" fill-opacity="0.034"/><rect x="1631" y="3" width="515" height="1" fill="#fff" fill-opacity="0.057"/><rect x="336" y="19" width="994" height="1" fill="#fff" fill-opacity="0.066"/><rect x="1579" y="3" width="217" height="1" fill="#fff" fill-opacity="0.049"/><rect x="980" y="2" width="311" height="1" fill="#fff" fill-opacity="0.03"/><rect x="590" y="22" width="802" height="1" fill="#fff" fill-opacity="0.032"/><rect x="1783" y="30" width="429" height="1" fill="#fff" fill-opacity="0.042"/><rect x="1348" y="17" width="376" height="1" fill="#fff" fill-opacity="0.066"/><rect x="1663" y="19" width="466" height="1" fill="#fff" fill-opacity="0.044"/><rect x="1101" y="25" width="876" height="1" fill="#fff" fill-opacity="0.047"/><rect x="1676" y="5" width="426" height="1" fill="#fff" fill-opacity="0.04"/><rect x="250" y="13" width="594" height="1" fill="#fff" fill-opacity="0.069"/><rect x="-63" y="17" width="873" height="1" fill="#fff" fill-opacity="0.066"/><rect x="1635" y="0" width="580" height="1" fill="#fff" fill-opacity="0.043"/><rect x="1426" y="15" width="820" height="1" fill="#fff" fill-opacity="0.064"/><rect x="342" y="26" width="990" height="1" fill="#fff" fill-opacity="0.036"/><rect x="1814" y="16" width="334" height="1" fill="#fff" fill-opacity="0.052"/><rect x="1813" y="17" width="747" height="1" fill="#fff" fill-opacity="0.023"/><rect x="-295" y="11" width="409" height="1" fill="#fff" fill-opacity="0.061"/><rect x="225" y="9" width="284" height="1" fill="#fff" fill-opacity="0.038"/><rect x="1666" y="6" width="910" height="1" fill="#fff" fill-opacity="0.043"/><rect x="-223" y="19" width="392" height="1" fill="#fff" fill-opacity="0.041"/><rect x="1503" y="5" width="413" height="1" fill="#fff" fill-opacity="0.022"/><rect x="1853" y="26" width="706" height="1" fill="#fff" fill-opacity="0.028"/><rect x="994" y="19" width="518" height="1" fill="#fff" fill-opacity="0.04"/><rect x="1613" y="19" width="883" height="1" fill="#fff" fill-opacity="0.056"/><rect x="4" y="23" width="903" height="1" fill="#fff" fill-opacity="0.027"/><rect x="1591" y="25" width="964" height="1" fill="#fff" fill-opacity="0.068"/><rect x="1523" y="7" width="212" height="1" fill="#fff" fill-opacity="0.063"/><rect x="672" y="30" width="500" height="1" fill="#fff" fill-opacity="0.048"/><rect x="-258" y="29" width="936" height="1" fill="#fff" fill-opacity="0.03"/><rect x="889" y="9" width="842" height="1" fill="#fff" fill-opacity="0.039"/><rect x="1081" y="19" width="973" height="1" fill="#fff" fill-opacity="0.04"/><rect x="750" y="5" width="393" height="1" fill="#fff" fill-opacity="0.03"/><rect x="1049" y="7" width="517" height="1" fill="#fff" fill-opacity="0.067"/><rect x="1058" y="30" width="657" height="1" fill="#fff" fill-opacity="0.061"/><rect x="117" y="5" width="344" height="1" fill="#fff" fill-opacity="0.051"/><rect x="434" y="8" width="384" height="1" fill="#fff" fill-opacity="0.03"/><rect x="1597" y="2" width="806" height="1" fill="#fff" fill-opacity="0.055"/><rect x="628" y="6" width="233" height="1" fill="#fff" fill-opacity="0.028"/><rect x="1476" y="7" width="616" height="1" fill="#fff" fill-opacity="0.059"/><rect x="1449" y="21" width="723" height="1" fill="#fff" fill-opacity="0.027"/><rect x="306" y="13" width="907" height="1" fill="#fff" fill-opacity="0.039"/><rect x="1388" y="21" width="837" height="1" fill="#fff" fill-opacity="0.021"/><rect x="1001" y="25" width="450" height="1" fill="#fff" fill-opacity="0.053"/><rect x="767" y="1" width="538" height="1" fill="#fff" fill-opacity="0.029"/><rect x="1507" y="19" width="308" height="1" fill="#fff" fill-opacity="0.048"/><rect x="1786" y="13" width="540" height="1" fill="#fff" fill-opacity="0.059"/><rect x="348" y="6" width="459" height="1" fill="#fff" fill-opacity="0.058"/><rect x="658" y="19" width="561" height="1" fill="#fff" fill-opacity="0.051"/><rect x="511" y="9" width="728" height="1" fill="#fff" fill-opacity="0.07"/><rect x="-191" y="12" width="842" height="1" fill="#fff" fill-opacity="0.053"/><rect x="258" y="5" width="450" height="1" fill="#fff" fill-opacity="0.044"/><rect x="1066" y="26" width="537" height="1" fill="#fff" fill-opacity="0.025"/><rect x="790" y="23" width="674" height="1" fill="#fff" fill-opacity="0.064"/><rect x="255" y="28" width="444" height="1" fill="#fff" fill-opacity="0.065"/><rect x="782" y="4" width="372" height="1" fill="#fff" fill-opacity="0.065"/><rect x="296" y="21" width="325" height="1" fill="#fff" fill-opacity="0.067"/></svg></div>
<div class="a" style="left:0;top:1152px;width:1928px;height:8px;background:#e5dfdf"></div>
<div class="a" style="left:1108px;top:1158.5px;width:9px;height:6px;border-radius:50%;background:#22aa22"></div>
<div class="a" style="left:1348px;top:1156.5px;width:38px;height:8px;border-radius:3px;background:#f1eeee"></div>

<!-- DRAW START -->
<svg style="left:0;top:0" width="1300" height="1120" viewBox="0 0 1300 1120"><g fill="none"><line x1="193" y1="531.3" x2="318" y2="531.3" stroke="#e6aaaa" stroke-width="1" stroke-opacity="1"/><line x1="1002" y1="531.3" x2="1127" y2="531.3" stroke="#e6aaaa" stroke-width="1" stroke-opacity="1"/><line x1="193" y1="547.1" x2="318" y2="547.1" stroke="#e6aaaa" stroke-width="1" stroke-opacity="1"/><line x1="1002" y1="547.1" x2="1127" y2="547.1" stroke="#e6aaaa" stroke-width="1" stroke-opacity="1"/><line x1="193" y1="745.5" x2="318" y2="745.5" stroke="#e6aaaa" stroke-width="1" stroke-opacity="1"/><line x1="1002" y1="745.5" x2="1127" y2="745.5" stroke="#e6aaaa" stroke-width="1" stroke-opacity="1"/><line x1="193" y1="765.5" x2="318" y2="765.5" stroke="#e6aaaa" stroke-width="1" stroke-opacity="1"/><line x1="1002" y1="765.5" x2="1127" y2="765.5" stroke="#e6aaaa" stroke-width="1" stroke-opacity="1"/><line x1="209.6" y1="529.2" x2="209.6" y2="768" stroke="#e6aaaa" stroke-width="1" stroke-opacity="1"/><line x1="259.7" y1="529.2" x2="259.7" y2="768" stroke="#e6aaaa" stroke-width="1" stroke-opacity="1"/><line x1="309.5" y1="529.2" x2="309.5" y2="768" stroke="#e6aaaa" stroke-width="1" stroke-opacity="1"/><line x1="1010.4" y1="529.2" x2="1010.4" y2="768" stroke="#e6aaaa" stroke-width="1" stroke-opacity="1"/><line x1="1060.4" y1="529.2" x2="1060.4" y2="768" stroke="#e6aaaa" stroke-width="1" stroke-opacity="1"/><line x1="1110.5" y1="529.2" x2="1110.5" y2="768" stroke="#e6aaaa" stroke-width="1" stroke-opacity="1"/><line x1="318" y1="531.3" x2="1002" y2="531.3" stroke="#ee1111" stroke-width="1.7" stroke-opacity="1"/><line x1="318" y1="547.1" x2="1002" y2="547.1" stroke="#ef8080" stroke-width="1.6" stroke-opacity="1"/><line x1="360" y1="529.5" x2="360" y2="767.5" stroke="#9b90ea" stroke-width="2.3" stroke-opacity="0.6"/><line x1="360" y1="529.5" x2="360" y2="767.5" stroke="#c46a6a" stroke-width="0.8" stroke-opacity="0.75"/><line x1="410" y1="529.5" x2="410" y2="767.5" stroke="#9b90ea" stroke-width="2.3" stroke-opacity="0.6"/><line x1="410" y1="529.5" x2="410" y2="767.5" stroke="#c46a6a" stroke-width="0.8" stroke-opacity="0.75"/><line x1="460" y1="529.5" x2="460" y2="767.5" stroke="#9b90ea" stroke-width="2.3" stroke-opacity="0.6"/><line x1="460" y1="529.5" x2="460" y2="767.5" stroke="#c46a6a" stroke-width="0.8" stroke-opacity="0.75"/><line x1="510" y1="529.5" x2="510" y2="767.5" stroke="#9b90ea" stroke-width="2.3" stroke-opacity="0.6"/><line x1="510" y1="529.5" x2="510" y2="767.5" stroke="#c46a6a" stroke-width="0.8" stroke-opacity="0.75"/><line x1="760.5" y1="529.5" x2="760.5" y2="767.5" stroke="#9b90ea" stroke-width="2.3" stroke-opacity="0.6"/><line x1="760.5" y1="529.5" x2="760.5" y2="767.5" stroke="#c46a6a" stroke-width="0.8" stroke-opacity="0.75"/><line x1="810" y1="529.5" x2="810" y2="767.5" stroke="#9b90ea" stroke-width="2.3" stroke-opacity="0.6"/><line x1="810" y1="529.5" x2="810" y2="767.5" stroke="#c46a6a" stroke-width="0.8" stroke-opacity="0.75"/><line x1="860.4" y1="529.5" x2="860.4" y2="767.5" stroke="#9b90ea" stroke-width="2.3" stroke-opacity="0.6"/><line x1="860.4" y1="529.5" x2="860.4" y2="767.5" stroke="#c46a6a" stroke-width="0.8" stroke-opacity="0.75"/><line x1="910.5" y1="529.5" x2="910.5" y2="767.5" stroke="#9b90ea" stroke-width="2.3" stroke-opacity="0.6"/><line x1="910.5" y1="529.5" x2="910.5" y2="767.5" stroke="#c46a6a" stroke-width="0.8" stroke-opacity="0.75"/><line x1="960.5" y1="529.5" x2="960.5" y2="767.5" stroke="#9b90ea" stroke-width="2.3" stroke-opacity="0.6"/><line x1="960.5" y1="529.5" x2="960.5" y2="767.5" stroke="#c46a6a" stroke-width="0.8" stroke-opacity="0.75"/><line x1="560.4" y1="529.5" x2="560.4" y2="767.5" stroke="#9b90ea" stroke-width="1.8" stroke-opacity="0.45"/><line x1="560.4" y1="727" x2="560.4" y2="753" stroke="#7070f0" stroke-width="3.6" stroke-opacity="0.65"/><line x1="760.5" y1="727" x2="760.5" y2="753" stroke="#7070f0" stroke-width="3.6" stroke-opacity="0.65"/><line x1="560.4" y1="529.5" x2="560.4" y2="767.5" stroke="#c46a6a" stroke-width="0.9" stroke-opacity="0.9"/><line x1="586.4" y1="529.5" x2="586.4" y2="767.5" stroke="#c46a6a" stroke-width="1" stroke-opacity="0.9"/><line x1="594.4" y1="529.5" x2="594.4" y2="767.5" stroke="#c46a6a" stroke-width="1" stroke-opacity="0.9"/><line x1="725.7" y1="529.5" x2="725.7" y2="767.5" stroke="#c46a6a" stroke-width="1" stroke-opacity="0.9"/><line x1="734.4" y1="529.5" x2="734.4" y2="767.5" stroke="#c46a6a" stroke-width="1" stroke-opacity="0.9"/><line x1="610.5" y1="529.5" x2="610.5" y2="608" stroke="#c46a6a" stroke-width="1" stroke-opacity="0.9"/><line x1="610.5" y1="689" x2="610.5" y2="767.5" stroke="#c46a6a" stroke-width="1" stroke-opacity="0.9"/><line x1="710.5" y1="529.5" x2="710.5" y2="608" stroke="#c46a6a" stroke-width="1" stroke-opacity="0.9"/><line x1="710.5" y1="689" x2="710.5" y2="767.5" stroke="#c46a6a" stroke-width="1" stroke-opacity="0.9"/><line x1="660.5" y1="529.5" x2="660.5" y2="584" stroke="#9b90ea" stroke-width="1.6" stroke-opacity="0.85"/><line x1="660.5" y1="712" x2="660.5" y2="767.5" stroke="#c46a6a" stroke-width="1" stroke-opacity="0.9"/><line x1="518.6" y1="574.3" x2="801.7" y2="574.3" stroke="#c46a6a" stroke-width="1" stroke-opacity="0.9"/><line x1="518.6" y1="583" x2="801.7" y2="583" stroke="#9b90ea" stroke-width="2" stroke-opacity="0.9"/><line x1="529.9" y1="714.4" x2="789.6" y2="714.4" stroke="#5050f0" stroke-width="5" stroke-opacity="0.7"/><line x1="518.6" y1="714.4" x2="801.7" y2="714.4" stroke="#c46a6a" stroke-width="0.8" stroke-opacity="0.8"/><line x1="529.9" y1="722.7" x2="789.6" y2="722.7" stroke="#5050f0" stroke-width="5" stroke-opacity="0.7"/><line x1="518.6" y1="722.7" x2="801.7" y2="722.7" stroke="#c46a6a" stroke-width="0.8" stroke-opacity="0.8"/><line x1="519.6" y1="696.6" x2="684" y2="531.3" stroke="#c46a6a" stroke-width="1" stroke-opacity="0.9"/><line x1="800.7" y1="696.6" x2="636" y2="531.3" stroke="#c46a6a" stroke-width="1" stroke-opacity="0.9"/><line x1="519.2" y1="600.5" x2="685.6" y2="766.3" stroke="#8888ee" stroke-width="2.6" stroke-opacity="0.6"/><line x1="801" y1="601" x2="636" y2="766.3" stroke="#8888ee" stroke-width="2.6" stroke-opacity="0.6"/><line x1="519.2" y1="600.5" x2="685.6" y2="766.3" stroke="#c46a6a" stroke-width="0.7" stroke-opacity="0.7"/><line x1="801" y1="601" x2="636" y2="766.3" stroke="#c46a6a" stroke-width="0.7" stroke-opacity="0.7"/><g stroke="#000"><rect x="193" y="523.3" width="934" height="250.5" stroke-width="2.3"/><line x1="193" y1="553.4" x2="1127" y2="553.4" stroke="#000" stroke-width="2.5" stroke-opacity="1"/><line x1="193" y1="558.4" x2="1127" y2="558.4" stroke="#000" stroke-width="2.5" stroke-opacity="1"/><line x1="193" y1="738.4" x2="1127" y2="738.4" stroke="#000" stroke-width="2.5" stroke-opacity="1"/><line x1="193" y1="743.5" x2="1127" y2="743.5" stroke="#000" stroke-width="2.5" stroke-opacity="1"/><line x1="318" y1="745.5" x2="1002" y2="745.5" stroke="#3535f0" stroke-width="6.6" stroke-opacity="0.95"/><line x1="318" y1="765.5" x2="1002" y2="765.5" stroke="#2020f0" stroke-width="6.6" stroke-opacity="1"/><line x1="318" y1="745.5" x2="1002" y2="745.5" stroke="#fff" stroke-width="6.6" stroke-opacity="0.15" stroke-dasharray="1 14.2"/><line x1="318" y1="765.5" x2="1002" y2="765.5" stroke="#fff" stroke-width="6.6" stroke-opacity="0.15" stroke-dasharray="1 14.2"/><line x1="318" y1="745.5" x2="1002" y2="745.5" stroke="#c46a6a" stroke-width="0.6" stroke-opacity="0.4"/><line x1="318" y1="765.5" x2="1002" y2="765.5" stroke="#c46a6a" stroke-width="0.6" stroke-opacity="0.4"/><line x1="360" y1="740" x2="360" y2="768" stroke="#c46a6a" stroke-width="0.8" stroke-opacity="0.8"/><line x1="410" y1="740" x2="410" y2="768" stroke="#c46a6a" stroke-width="0.8" stroke-opacity="0.8"/><line x1="460" y1="740" x2="460" y2="768" stroke="#c46a6a" stroke-width="0.8" stroke-opacity="0.8"/><line x1="510" y1="740" x2="510" y2="768" stroke="#c46a6a" stroke-width="0.8" stroke-opacity="0.8"/><line x1="560.4" y1="740" x2="560.4" y2="768" stroke="#c46a6a" stroke-width="0.8" stroke-opacity="0.8"/><line x1="586.4" y1="740" x2="586.4" y2="768" stroke="#c46a6a" stroke-width="0.8" stroke-opacity="0.8"/><line x1="594.4" y1="740" x2="594.4" y2="768" stroke="#c46a6a" stroke-width="0.8" stroke-opacity="0.8"/><line x1="610.5" y1="740" x2="610.5" y2="768" stroke="#c46a6a" stroke-width="0.8" stroke-opacity="0.8"/><line x1="660.5" y1="740" x2="660.5" y2="768" stroke="#c46a6a" stroke-width="0.8" stroke-opacity="0.8"/><line x1="710.5" y1="740" x2="710.5" y2="768" stroke="#c46a6a" stroke-width="0.8" stroke-opacity="0.8"/><line x1="725.7" y1="740" x2="725.7" y2="768" stroke="#c46a6a" stroke-width="0.8" stroke-opacity="0.8"/><line x1="734.4" y1="740" x2="734.4" y2="768" stroke="#c46a6a" stroke-width="0.8" stroke-opacity="0.8"/><line x1="760.5" y1="740" x2="760.5" y2="768" stroke="#c46a6a" stroke-width="0.8" stroke-opacity="0.8"/><line x1="810" y1="740" x2="810" y2="768" stroke="#c46a6a" stroke-width="0.8" stroke-opacity="0.8"/><line x1="860.4" y1="740" x2="860.4" y2="768" stroke="#c46a6a" stroke-width="0.8" stroke-opacity="0.8"/><line x1="910.5" y1="740" x2="910.5" y2="768" stroke="#c46a6a" stroke-width="0.8" stroke-opacity="0.8"/><line x1="960.5" y1="740" x2="960.5" y2="768" stroke="#c46a6a" stroke-width="0.8" stroke-opacity="0.8"/><line x1="318" y1="522" x2="318" y2="775" stroke="#000" stroke-width="2.4" stroke-opacity="1"/><line x1="1002" y1="522" x2="1002" y2="775" stroke="#000" stroke-width="2.4" stroke-opacity="1"/><circle cx="660" cy="648.3" r="58" stroke-width="2"/></g><rect x="804" y="518.5" width="53" height="12" fill="#fff"/><rect x="530" y="753.5" width="56" height="12" fill="#fff"/><circle cx="804.5" cy="531.3" r="2.8" fill="#000"/><circle cx="530.7" cy="765.5" r="2.8" fill="#000"/></g></svg>
<div class="t" style="left:805.5px;top:518.5px;font-size:11px;line-height:13px;font-weight:bold;color:#000">-78.8 MPa</div>
<div class="t" style="left:531.5px;top:752.5px;font-size:11px;line-height:13px;font-weight:bold;color:#000">367.1 MPa</div>
<!-- DRAW END -->

<!-- RIGHT START -->
<div class="a" style="left:1383px;top:158px;width:111px;height:31px;border:4px solid #ff0000;border-radius:8px;background:#f0f0f0"></div>
<div class="t" style="left:1325.4px;top:166.5px;color:#fff;font-size:12px">Concrete</div>
<div class="t" style="left:1399px;top:166.5px;color:#f26f22;font-size:12px">Reinforcement</div>
<div class="t" style="left:1326px;top:205px;font-weight:bold;font-size:11.7px;color:#333">Extreme ULS: C1 (G100.0%, V100.0%)</div>
<div class="t" style="left:1326px;top:232.5px;color:#333">Load increment</div>
<div class="a" style="left:1476px;top:229px;width:434px;height:21px;background:#e6e6e6"></div>
<div class="t" style="left:1482px;top:232.5px;font-size:11px;color:#222">G100.0%, V100.0%</div>
<svg style="left:0;top:0" width="1928" height="500"><path d="M1897 236.5 H1905 L1901 242 Z" fill="#111"/></svg>
<div class="a" style="left:1327px;top:261px;width:583px;height:32px;background:#f0f0f0"></div>
<div class="a" style="left:1327px;top:293px;width:583px;height:29px;background:#e0e0e0"></div>
<svg style="left:0;top:0" width="1928" height="500"><g stroke="#b4b4b4" stroke-width="1.2"><line x1="1445.3" y1="260.6" x2="1445.3" y2="467.9"/><line x1="1495.4" y1="260.6" x2="1495.4" y2="467.9"/><line x1="1545.3" y1="260.6" x2="1545.3" y2="467.9"/><line x1="1604.6" y1="260.6" x2="1604.6" y2="467.9"/><line x1="1664.4" y1="260.6" x2="1664.4" y2="467.9"/><line x1="1746.3" y1="260.6" x2="1746.3" y2="467.9"/><line x1="1837.6" y1="260.6" x2="1837.6" y2="467.9"/><line x1="1326.5" y1="260.6" x2="1909.5" y2="260.6"/><line x1="1326.5" y1="293.3" x2="1909.5" y2="293.3"/><line x1="1326.5" y1="322.4" x2="1909.5" y2="322.4"/><line x1="1326.5" y1="351.5" x2="1909.5" y2="351.5"/><line x1="1326.5" y1="380.6" x2="1909.5" y2="380.6"/><line x1="1326.5" y1="409.7" x2="1909.5" y2="409.7"/><line x1="1326.5" y1="438.8" x2="1909.5" y2="438.8"/><line x1="1326.5" y1="467.9" x2="1909.5" y2="467.9"/><line x1="1327" y1="260" x2="1327" y2="485.5" stroke-width="2"/><line x1="1909.5" y1="260" x2="1909.5" y2="485.5"/><line x1="1326.5" y1="485" x2="1910" y2="485"/></g><rect x="1328" y="472.8" width="581" height="8" fill="#efefef"/><rect x="1328" y="472.8" width="540" height="8" fill="#d2d2d2"/><path d="M1427 273.5 H1435.5 L1432.3 277.5 V282 L1430.2 281 V277.5 Z" fill="#333"/><line x1="1319" y1="638" x2="1917" y2="638" stroke="#d4d4d4" stroke-width="1"/></svg>
<div class="t" style="left:1331.3px;top:270.8px;font-weight:bold;color:#333;font-size:12px;overflow:hidden;max-width:114px">Reinforcement</div>
<div class="t" style="left:1450.1px;top:270.8px;font-weight:bold;color:#333;font-size:12px;overflow:hidden;max-width:45px">X [m]</div>
<div class="t" style="left:1500.2px;top:270.8px;font-weight:bold;color:#333;font-size:12px;overflow:hidden;max-width:45px">Z [m]</div>
<div class="t" style="left:1550.1px;top:270.8px;font-weight:bold;color:#333;font-size:11.3px;overflow:hidden;max-width:54px">&#963;s [MPa]</div>
<div class="t" style="left:1609.4px;top:270.8px;font-weight:bold;color:#333;font-size:11.3px;overflow:hidden;max-width:55px">&#949;s [1e-4]</div>
<div class="t" style="left:1669.2px;top:270.8px;font-weight:bold;color:#333;font-size:11.3px;overflow:hidden;max-width:77px">&#963;s/&#963;s,lim [%]</div>
<div class="t" style="left:1751.1px;top:270.8px;font-weight:bold;color:#333;font-size:11.3px;overflow:hidden;max-width:86px">&#963;s/&#963;s,yield [%]</div>
<div class="t" style="left:1842.4px;top:270.8px;font-weight:bold;color:#333;font-size:11.3px;overflow:hidden;max-width:67px">&#949;s/&#949;s,lim [%]</div>
<div class="t" style="left:1331.3px;top:301.9px;color:#4a4a4a">GB1</div>
<div class="t" style="left:1450.1px;top:301.9px;color:#4a4a4a">2.03</div>
<div class="t" style="left:1500.2px;top:301.9px;color:#4a4a4a">-0.70</div>
<div class="t" style="left:1550.1px;top:301.9px;font-weight:bold;color:#333">367.1</div>
<div class="t" style="left:1609.4px;top:301.9px;font-weight:bold;color:#333">16.5</div>
<div class="t" style="left:1669.2px;top:301.9px;font-weight:bold;color:#333">78.2</div>
<div class="t" style="left:1751.1px;top:301.9px;font-weight:bold;color:#333">84.4</div>
<div class="t" style="left:1842.4px;top:301.9px;font-weight:bold;color:#333">7.5</div>
<div class="t" style="left:1331.3px;top:330.8px;color:#4a4a4a">RO1</div>
<div class="t" style="left:1450.1px;top:330.8px;color:#4a4a4a">2.94</div>
<div class="t" style="left:1500.2px;top:330.8px;color:#4a4a4a">-0.44</div>
<div class="t" style="left:1550.1px;top:330.8px;font-weight:bold;color:#333">279.1</div>
<div class="t" style="left:1609.4px;top:330.8px;font-weight:bold;color:#333">10.1</div>
<div class="t" style="left:1669.2px;top:330.8px;font-weight:bold;color:#333">59.4</div>
<div class="t" style="left:1751.1px;top:330.8px;font-weight:bold;color:#333">64.2</div>
<div class="t" style="left:1842.4px;top:330.8px;font-weight:bold;color:#333">8.6</div>
<div class="t" style="left:1331.3px;top:359.6px;color:#4a4a4a">ST1</div>
<div class="t" style="left:1450.1px;top:359.6px;color:#4a4a4a">3.40</div>
<div class="t" style="left:1500.2px;top:359.6px;color:#4a4a4a">-0.54</div>
<div class="t" style="left:1550.1px;top:359.6px;font-weight:bold;color:#333">223.8</div>
<div class="t" style="left:1609.4px;top:359.6px;font-weight:bold;color:#333">2.6</div>
<div class="t" style="left:1669.2px;top:359.6px;font-weight:bold;color:#333">47.7</div>
<div class="t" style="left:1751.1px;top:359.6px;font-weight:bold;color:#333">51.5</div>
<div class="t" style="left:1842.4px;top:359.6px;font-weight:bold;color:#333">6.1</div>
<div class="t" style="left:1331.3px;top:388.5px;color:#4a4a4a">GB2</div>
<div class="t" style="left:1450.1px;top:388.5px;color:#4a4a4a">3.67</div>
<div class="t" style="left:1500.2px;top:388.5px;color:#4a4a4a">0.70</div>
<div class="t" style="left:1550.1px;top:388.5px;color:#4a4a4a">-78.8</div>
<div class="t" style="left:1609.4px;top:388.5px;color:#4a4a4a">-3.9</div>
<div class="t" style="left:1669.2px;top:388.5px;font-weight:bold;color:#333">16.8</div>
<div class="t" style="left:1751.1px;top:388.5px;font-weight:bold;color:#333">18.1</div>
<div class="t" style="left:1842.4px;top:388.5px;font-weight:bold;color:#333">0.9</div>
<div class="t" style="left:1331.3px;top:417.3px;color:#4a4a4a">GB2</div>
<div class="t" style="left:1450.1px;top:417.3px;color:#4a4a4a">0.75</div>
<div class="t" style="left:1500.2px;top:417.3px;color:#4a4a4a">0.61</div>
<div class="t" style="left:1550.1px;top:417.3px;color:#4a4a4a">-38.5</div>
<div class="t" style="left:1609.4px;top:417.3px;font-weight:bold;color:#333">-1.9</div>
<div class="t" style="left:1669.2px;top:417.3px;color:#4a4a4a">8.2</div>
<div class="t" style="left:1751.1px;top:417.3px;color:#4a4a4a">8.8</div>
<div class="t" style="left:1842.4px;top:417.3px;color:#4a4a4a">0.4</div>
<div class="t" style="left:1331.3px;top:446.2px;color:#4a4a4a">GB2</div>
<div class="t" style="left:1450.1px;top:446.2px;color:#4a4a4a">4.76</div>
<div class="t" style="left:1500.2px;top:446.2px;color:#4a4a4a">0.61</div>
<div class="t" style="left:1550.1px;top:446.2px;font-weight:bold;color:#333">-38.5</div>
<div class="t" style="left:1609.4px;top:446.2px;color:#4a4a4a">-1.9</div>
<div class="t" style="left:1669.2px;top:446.2px;color:#4a4a4a">8.2</div>
<div class="t" style="left:1751.1px;top:446.2px;color:#4a4a4a">8.8</div>
<div class="t" style="left:1842.4px;top:446.2px;color:#4a4a4a">0.4</div>
<div class="t" style="left:1339px;top:794.5px;font-size:13px;line-height:15px;color:#111">Results for: GB1</div>
<svg style="left:0;top:0" width="1928" height="1000"><g fill="none"><line x1="1339" y1="952.2" x2="1414" y2="952.2" stroke="#e6aaaa" stroke-width="1"/><line x1="1822" y1="952.2" x2="1897" y2="952.2" stroke="#e6aaaa" stroke-width="1"/><line x1="1339" y1="964.4" x2="1414" y2="964.4" stroke="#e6aaaa" stroke-width="1"/><line x1="1822" y1="964.4" x2="1897" y2="964.4" stroke="#e6aaaa" stroke-width="1"/><g stroke="#000" stroke-width="2"><rect x="1339.5" y="819.5" width="558" height="150"/><line x1="1414" y1="819" x2="1414" y2="970"/><line x1="1822" y1="819" x2="1822" y2="970"/><line x1="1339" y1="838.2" x2="1898" y2="838.2" stroke-width="1.6"/><line x1="1339" y1="841.4" x2="1898" y2="841.4" stroke-width="1.6"/><line x1="1339" y1="949.3" x2="1898" y2="949.3" stroke-width="4"/></g><line x1="1415" y1="952.6" x2="1821" y2="952.6" stroke="#2828e6" stroke-width="4.4"/><line x1="1415" y1="964.5" x2="1821" y2="964.5" stroke="#2828e6" stroke-width="4.8"/><g stroke="#000" stroke-width="2"><circle cx="1617.6" cy="894.7" r="35.3"/></g><rect x="1614" y="941" width="54" height="10" fill="#fff"/><rect x="1541" y="953" width="54" height="10" fill="#fff"/><circle cx="1613.5" cy="952.6" r="2.5" fill="#000"/><circle cx="1540.5" cy="964.4" r="2.5" fill="#000"/></g></svg>
<div class="t" style="left:1614px;top:940px;font-size:11px;line-height:12px;font-weight:bold;color:#000">270.5 MPa</div>
<div class="t" style="left:1541.6px;top:951.5px;font-size:11px;line-height:12px;font-weight:bold;color:#000">367.1 MPa</div>
<!-- RIGHT END -->

<!-- MAIN START -->
<svg style="left:0;top:0" width="400" height="400"><circle cx="24.3" cy="211" r="7.4" fill="#5cc64b"/><circle cx="24.3" cy="211" r="6.800000000000001" fill="none" stroke="#4fb83f" stroke-width="1.2"/><path d="M20.7 211.2 L23.400000000000002 213.9 L28.1 208.6" fill="none" stroke="#fff" stroke-width="2.2" stroke-linecap="round" stroke-linejoin="round"/><circle cx="135.4" cy="226.8" r="7.4" fill="#5cc64b"/><circle cx="135.4" cy="226.8" r="6.800000000000001" fill="none" stroke="#4fb83f" stroke-width="1.2"/><path d="M131.8 227.0 L134.5 229.70000000000002 L139.20000000000002 224.4" fill="none" stroke="#fff" stroke-width="2.2" stroke-linecap="round" stroke-linejoin="round"/><circle cx="135.4" cy="247.5" r="7.4" fill="#5cc64b"/><circle cx="135.4" cy="247.5" r="6.800000000000001" fill="none" stroke="#4fb83f" stroke-width="1.2"/><path d="M131.8 247.7 L134.5 250.4 L139.20000000000002 245.1" fill="none" stroke="#fff" stroke-width="2.2" stroke-linecap="round" stroke-linejoin="round"/><circle cx="135.4" cy="268.6" r="7.4" fill="#5cc64b"/><circle cx="135.4" cy="268.6" r="6.800000000000001" fill="none" stroke="#4fb83f" stroke-width="1.2"/><path d="M131.8 268.8 L134.5 271.5 L139.20000000000002 266.20000000000005" fill="none" stroke="#fff" stroke-width="2.2" stroke-linecap="round" stroke-linejoin="round"/><circle cx="24.3" cy="289.9" r="7.4" fill="#5cc64b"/><circle cx="24.3" cy="289.9" r="6.800000000000001" fill="none" stroke="#4fb83f" stroke-width="1.2"/><path d="M20.7 290.09999999999997 L23.400000000000002 292.79999999999995 L28.1 287.5" fill="none" stroke="#fff" stroke-width="2.2" stroke-linecap="round" stroke-linejoin="round"/><circle cx="142.3" cy="305.7" r="7.4" fill="#5cc64b"/><circle cx="142.3" cy="305.7" r="6.800000000000001" fill="none" stroke="#4fb83f" stroke-width="1.2"/><path d="M138.70000000000002 305.9 L141.4 308.59999999999997 L146.10000000000002 303.3" fill="none" stroke="#fff" stroke-width="2.2" stroke-linecap="round" stroke-linejoin="round"/><circle cx="142.3" cy="326.6" r="7.4" fill="#5cc64b"/><circle cx="142.3" cy="326.6" r="6.800000000000001" fill="none" stroke="#4fb83f" stroke-width="1.2"/><path d="M138.70000000000002 326.8 L141.4 329.5 L146.10000000000002 324.20000000000005" fill="none" stroke="#fff" stroke-width="2.2" stroke-linecap="round" stroke-linejoin="round"/></svg>
<div class="t" style="left:37.6px;top:204.6px;font-weight:bold">ULS:</div>
<div class="t" style="left:17.4px;top:220.8px;">Concrete</div>
<div class="t" style="left:104px;top:220.8px;">C1</div>
<div class="t" style="left:152.9px;top:220.8px;">42.0%</div>
<div class="t" style="left:17.4px;top:241.5px;">Reinforcement</div>
<div class="t" style="left:104px;top:241.5px;">C1</div>
<div class="t" style="left:152.9px;top:241.5px;">78.2%</div>
<div class="t" style="left:17.4px;top:262.6px;">Anchorage</div>
<div class="t" style="left:104px;top:262.6px;">C1</div>
<div class="t" style="left:152.9px;top:262.6px;">99.8%</div>
<div class="t" style="left:37.1px;top:283.3px;font-weight:bold">SLS:</div>
<div class="t" style="left:17.4px;top:299.5px;">Stress limitation</div>
<div class="t" style="left:111px;top:299.5px;">C3</div>
<div class="t" style="left:159.8px;top:299.5px;">70.4%</div>
<div class="t" style="left:17.4px;top:320.7px;">Crack width</div>
<div class="t" style="left:111px;top:320.7px;">C2</div>
<div class="t" style="left:159.8px;top:320.7px;">95.3%</div>
<div class="a" style="left:1153px;top:286px;width:129px;height:21px;background:#f26f22"></div>
<svg style="left:0;top:0" width="1300" height="400"><path d="M1145.5 293.3 V300.9 H1138.5 Z" fill="#333"/><path d="M1145.5 337.3 V344.9 H1138.5 Z" fill="#333"/></svg>
<div class="t" style="left:1158.4px;top:288.7px;font-weight:bold;color:#fff;font-size:11.6px">ULS Combinations</div>
<div class="t" style="left:1157.3px;top:310.9px;color:#222">C1</div>
<div class="t" style="left:1158.4px;top:333.2px;font-weight:bold;color:#a8a8a8;font-size:11.6px">SLS Combinations</div>
<div class="t" style="left:1157.3px;top:354.8px;color:#b4b4b4">C2</div>
<div class="t" style="left:1157.3px;top:377px;color:#b4b4b4">C3</div>
<div class="a" style="left:1164px;top:158px;width:27px;height:26px;background:#ececec"></div>
<svg style="left:0;top:0" width="1300" height="200"><g fill="none" stroke="#333" stroke-width="1.2">
<circle cx="1130.8" cy="169.8" r="6.6" stroke-width="1.3"/><path d="M1135.5 174.5 L1139.6 178.6" stroke-width="1.5"/>
<path d="M1149 168.5 L1152.5 172 L1156 168.5" stroke-width="1.3"/>
<path d="M1161.5 160.5 V182" stroke="#aaa" stroke-width="1"/>
<g stroke="#555" stroke-width="1.1"><path d="M1170.3 168.1 L1175.2 163.2 H1186.1 V173.5 L1181.2 178.4 H1170.3 Z M1170.3 168.1 H1181.2 V178.4 M1181.2 168.1 L1186.1 163.2"/><path d="M1176 169 V173.5 H1186 M1176 173.5 L1171 178.4" stroke="#888" stroke-width="0.8"/></g>
<path d="M1197 167 L1201 163 H1213 V175 L1209 179 H1197 Z" fill="#6a6a6a" stroke="#6a6a6a"/>
<path d="M1197 167 H1209 V179 M1209 167 L1213 163" stroke="#ddd" stroke-width="1"/>
<path d="M1218.5 160.5 V182" stroke="#aaa" stroke-width="1"/>
<path d="M1226.5 167.5 L1238 165 L1242 166.5 V172 L1229.5 177 L1226.5 175.5 Z M1226.5 167.5 L1229.5 169 L1242 166.5 M1229.5 169 V177" stroke="#555" stroke-width="1.1"/>
<path d="M1253.5 171 L1260.5 164.5 L1267.5 171 M1255.5 169.5 V178 H1258.5 V173.5 H1262.5 V178 H1265.5 V169.5" stroke="#bbb" stroke-width="1.1"/>
<g stroke="#111" stroke-width="1.4"><path d="M1280 168.5 V163.5 H1285 M1280 163.5 L1284.5 168"/><path d="M1294.5 168.5 V163.5 H1289.5 M1294.5 163.5 L1290 168"/><path d="M1280 173.5 V178.5 H1285 M1280 178.5 L1284.5 174"/><path d="M1294.5 173.5 V178.5 H1289.5 M1294.5 178.5 L1290 174"/></g>
</g></svg>
<div class="t" style="left:98.5px;top:634px;font-size:14px;line-height:16px">&#963;s</div>
<div class="t" style="left:91px;top:654px;font-size:9px;line-height:11px;color:#333">[MPa]</div>
<svg style="left:0;top:0" width="200" height="1000"><rect x="85" y="694.80" width="31" height="19.05" fill="#1818ff"/><rect x="85" y="713.55" width="31" height="19.05" fill="#3535ff"/><rect x="85" y="732.30" width="31" height="19.05" fill="#4d4dff"/><rect x="85" y="751.05" width="31" height="19.05" fill="#6666ff"/><rect x="85" y="769.80" width="31" height="19.05" fill="#8080ff"/><rect x="85" y="788.55" width="31" height="19.05" fill="#9d9dff"/><rect x="85" y="807.30" width="31" height="19.05" fill="#bdbdff"/><rect x="85" y="826.05" width="31" height="19.05" fill="#dcdcff"/><rect x="85" y="844.80" width="31" height="19.05" fill="#ffdcdc"/><rect x="85" y="863.55" width="31" height="19.05" fill="#ffbdbd"/><rect x="85" y="882.30" width="31" height="19.05" fill="#ff9d9d"/><rect x="85" y="901.05" width="31" height="19.05" fill="#ff8080"/><rect x="85" y="919.80" width="31" height="19.05" fill="#ff6262"/><rect x="85" y="938.55" width="31" height="19.05" fill="#ff4646"/><rect x="85" y="957.30" width="31" height="19.05" fill="#ff2525"/><rect x="85" y="976.05" width="31" height="19.05" fill="#ff0606"/><rect x="85" y="694.8" width="31" height="300" fill="none" stroke="#333" stroke-width="1"/></svg>
<div class="t" style="left:17.5px;width:60px;text-align:right;top:687.8px;font-size:11px;color:#222">367.1</div>
<div class="t" style="left:17.5px;width:60px;text-align:right;top:706.5px;font-size:11px;color:#222">321.2</div>
<div class="t" style="left:17.5px;width:60px;text-align:right;top:725.3px;font-size:11px;color:#222">275.3</div>
<div class="t" style="left:17.5px;width:60px;text-align:right;top:744.0px;font-size:11px;color:#222">229.5</div>
<div class="t" style="left:17.5px;width:60px;text-align:right;top:762.8px;font-size:11px;color:#222">183.6</div>
<div class="t" style="left:17.5px;width:60px;text-align:right;top:781.5px;font-size:11px;color:#222">137.7</div>
<div class="t" style="left:17.5px;width:60px;text-align:right;top:800.3px;font-size:11px;color:#222">91.8</div>
<div class="t" style="left:17.5px;width:60px;text-align:right;top:819.0px;font-size:11px;color:#222">45.9</div>
<div class="t" style="left:17.5px;width:60px;text-align:right;top:837.8px;font-size:11px;color:#222">0.0</div>
<div class="t" style="left:17.5px;width:60px;text-align:right;top:856.5px;font-size:11px;color:#222">-9.9</div>
<div class="t" style="left:17.5px;width:60px;text-align:right;top:875.3px;font-size:11px;color:#222">-19.7</div>
<div class="t" style="left:17.5px;width:60px;text-align:right;top:894.0px;font-size:11px;color:#222">-29.6</div>
<div class="t" style="left:17.5px;width:60px;text-align:right;top:912.8px;font-size:11px;color:#222">-39.4</div>
<div class="t" style="left:17.5px;width:60px;text-align:right;top:931.5px;font-size:11px;color:#222">-49.3</div>
<div class="t" style="left:17.5px;width:60px;text-align:right;top:950.3px;font-size:11px;color:#222">-59.1</div>
<div class="t" style="left:17.5px;width:60px;text-align:right;top:969.0px;font-size:11px;color:#222">-69.0</div>
<div class="t" style="left:17.5px;width:60px;text-align:right;top:987.8px;font-size:11px;color:#222">-78.8</div>
<div class="t" style="left:26px;top:1131px;color:#9a9a9a">Design Code: <b style="color:#fff">EN</b></div>
<div class="t" style="left:146.3px;top:1131px;color:#9a9a9a">Rounding: <b style="color:#fff">Metric</b></div>
<div class="t" style="left:272.3px;top:1131px;color:#9a9a9a">Presentation Units: <b style="color:#fff">Metric</b></div>
<div class="t" style="left:1801.7px;top:1131px;color:#fff"><span style="color:#f26f22">www.</span>ideastatica <span style="color:#f26f22">.com</span></div>
<!-- MAIN END -->
</body></html>
